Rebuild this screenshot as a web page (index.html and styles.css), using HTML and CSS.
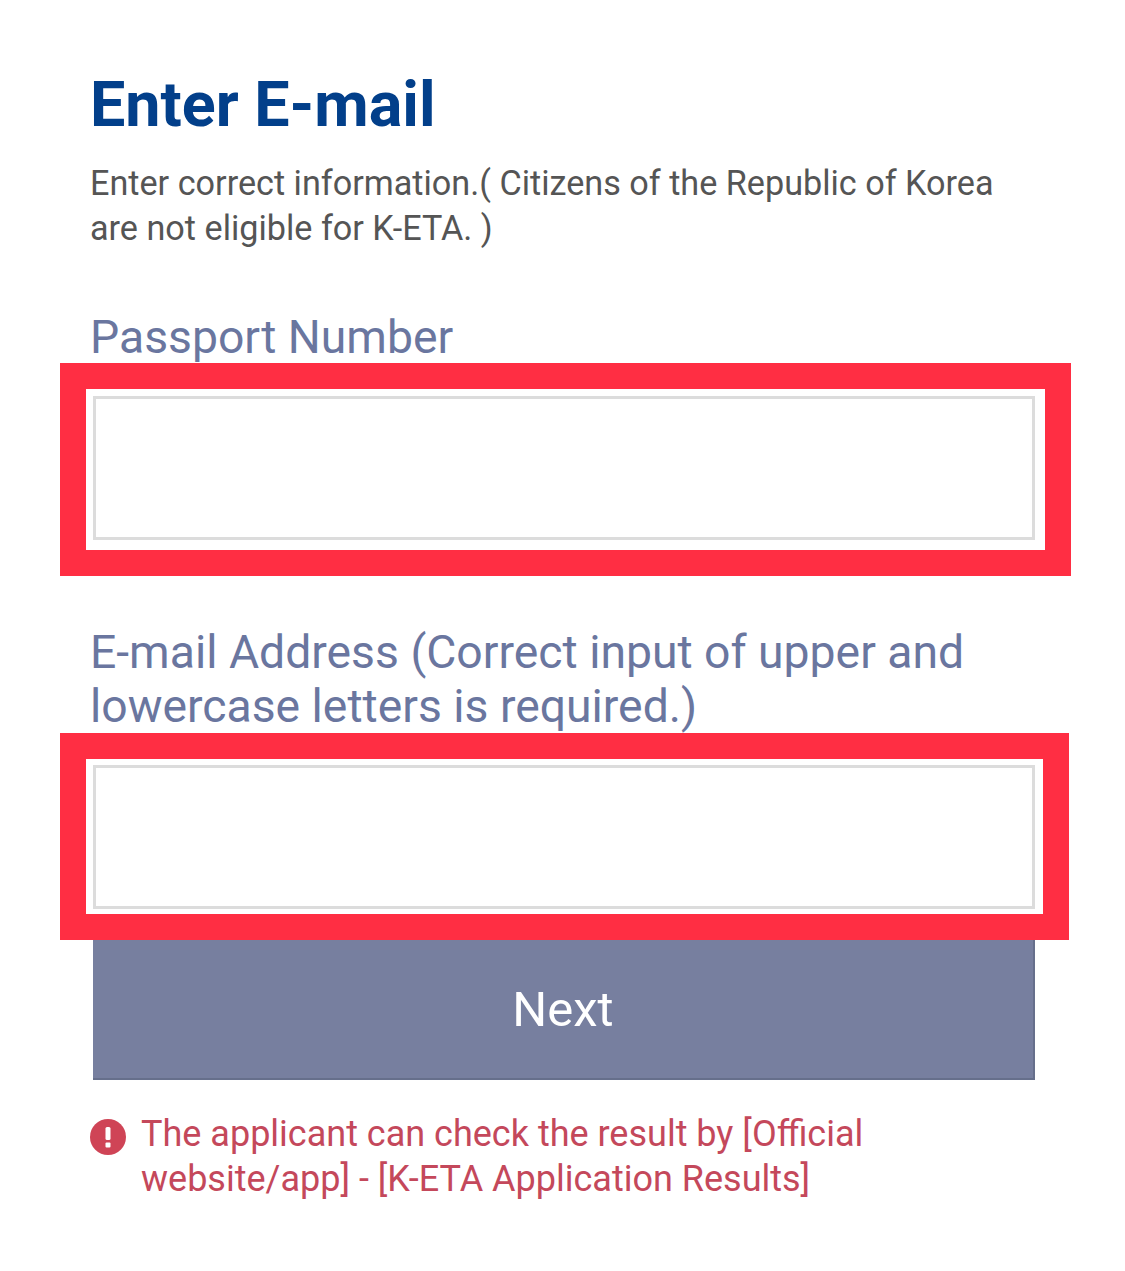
FILE: index.html
```html
<!DOCTYPE html>
<html lang="en">
<head>
    <meta charset="UTF-8">
    <title>Enter E-mail</title>
    <link rel="stylesheet" href="styles.css">
</head>
<body>
    <div class="page">
        <h1 class="title">Enter E-mail</h1>
        <p class="intro">Enter correct information.( Citizens of the Republic of Korea are not eligible for K-ETA. )</p>

        <label class="field-label first">Passport Number</label>
        <div class="highlight">
            <input type="text" class="field">
        </div>

        <label class="field-label second">E-mail Address (Correct input of upper and lowercase letters is required.)</label>
        <div class="highlight narrow">
            <input type="text" class="field">
        </div>

        <button class="next-btn">Next</button>

        <div class="notice">
            <svg class="notice-icon" viewBox="0 0 36 36">
                <circle cx="18" cy="18" r="18" fill="#cf4456"/>
                <rect x="15.5" y="8" width="5" height="13" rx="1.5" fill="#fff"/>
                <rect x="15.5" y="23.5" width="5" height="5" rx="1" fill="#fff"/>
            </svg>
            <p class="notice-text">The applicant can check the result by [Official website/app] - [K-ETA Application Results]</p>
        </div>
    </div>
</body>
</html>
```

FILE: styles.css
```css
* {
    box-sizing: border-box;
}
body {
    margin: 0;
    background-color: #fff;
    font-family: Roboto, "Liberation Sans", sans-serif;
}
.page {
    padding: 67px 0 0 90px;
    height: 1271px;
    overflow: hidden;
}
.title {
    margin: 0;
    font-size: 62.8px;
    line-height: 76px;
    font-weight: 700;
    color: #023f8a;
}
.intro {
    width: 930px;
    margin: 18px 0 0;
    font-size: 34.2px;
    line-height: 45px;
    color: #555;
}
.field-label {
    display: block;
    width: 930px;
    font-size: 46.3px;
    line-height: 54px;
    color: #6a769f;
}
.field-label.first {
    margin-top: 59px;
}
.field-label.second {
    margin-top: 49px;
}
.highlight {
    width: 1011px;
    height: 213px;
    margin: -1px 0 0 -30px;
    padding: 7px;
    border: 26px solid #ff2e43;
    background-color: #fff;
}
.highlight.narrow {
    width: 1009px;
    height: 207px;
    margin-top: 0;
    padding-top: 6px;
}
.field {
    display: block;
    width: 942px;
    height: 144px;
    padding: 0;
    border: 3px solid #dcdcdc;
    background-color: #fff;
}
.next-btn {
    display: block;
    width: 942px;
    height: 140px;
    margin-left: 3px;
    border: 0;
    border-right: 2px solid #666f8b;
    border-bottom: 2px solid #666f8b;
    background-color: #777f9f;
    color: #fff;
    font-family: inherit;
    font-size: 49px;
}
.notice {
    display: flex;
    align-items: flex-start;
    gap: 15px;
    margin-top: 32px;
}
.notice-icon {
    width: 36px;
    height: 36px;
    margin-top: 7px;
    flex-shrink: 0;
}
.notice-text {
    width: 760px;
    margin: 0;
    font-size: 36px;
    line-height: 45px;
    color: #c4485b;
}
```
